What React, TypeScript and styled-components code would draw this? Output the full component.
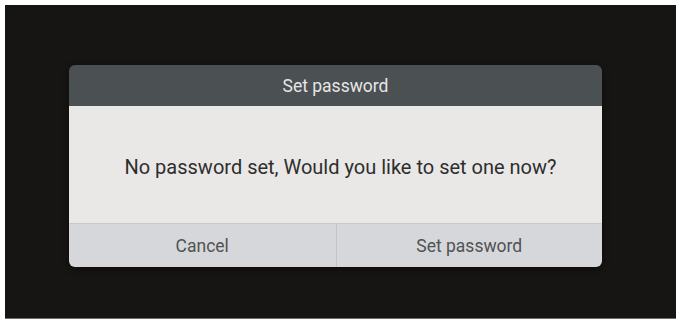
import React from "react";
import styled, { createGlobalStyle } from "styled-components";

const Global = createGlobalStyle`
  html, body { margin: 0; padding: 0; background: #ffffff; }
  body { font-family: Roboto, "Noto Sans", "Liberation Sans", sans-serif; }
`;

const Page = styled.div`
  width: 676px;
  height: 323px;
  padding: 5px 0 0 5px;
  box-sizing: border-box;
  background: #ffffff;
`;

const Screen = styled.div`
  height: 314px;
  background: #171513;
  border-bottom: 1px solid #6d6d6d;
  box-sizing: border-box;
  padding: 60px 0 0 64px;
`;

const Dialog = styled.div`
  width: 533px;
  border-radius: 6px;
  overflow: hidden;
  display: flex;
  flex-direction: column;
  box-shadow: 0 2px 6px rgba(0, 0, 0, 0.5);
`;

const Header = styled.div`
  height: 41px;
  background: #4b5053;
  color: #e6e6e6;
  font-size: 17.5px;
  display: flex;
  align-items: center;
  justify-content: center;
`;

const Body = styled.div`
  height: 118px;
  background: #e9e8e6;
  color: #2e2e2e;
  font-size: 20px;
  display: flex;
  align-items: center;
  justify-content: center;
  padding: 5px 0 0 10px;
  box-sizing: border-box;
  border-bottom: 1px solid #c9cacd;
`;

const Actions = styled.div`
  height: 43px;
  background: #d6d7da;
  display: grid;
  grid-template-columns: 1fr 1fr;
`;

const Action = styled.div<{ $divider?: boolean }>`
  display: flex;
  align-items: center;
  justify-content: center;
  color: #505254;
  font-size: 17.5px;
  border-left: ${(p) => (p.$divider ? "1px solid #c3c4c7" : "none")};
`;

export default function App() {
  return (
    <>
      <Global />
      <Page>
        <Screen>
          <Dialog>
            <Header>Set password</Header>
            <Body>No password set, Would you like to set one now?</Body>
            <Actions>
              <Action>Cancel</Action>
              <Action $divider>Set password</Action>
            </Actions>
          </Dialog>
        </Screen>
      </Page>
    </>
  );
}
